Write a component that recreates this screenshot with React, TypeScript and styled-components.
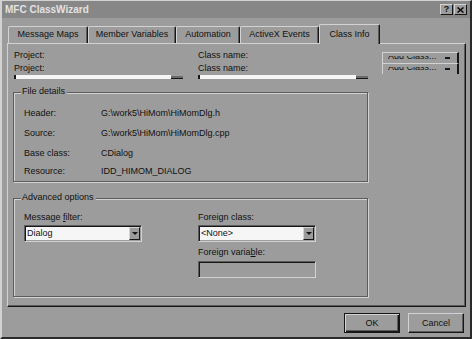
import React from "react";
import styled, { createGlobalStyle, css } from "styled-components";

const face = "#9c9c9c";
const light = "#d2d2d2";
const shadow = "#5c5c5c";
const dark = "#161616";
const white = "#f6f6f6";

const GlobalStyle = createGlobalStyle`
  * { box-sizing: border-box; }
  html, body { margin: 0; padding: 0; background: ${face}; }
  body {
    width: 472px;
    height: 339px;
    overflow: hidden;
    font-family: "Liberation Sans", Arial, sans-serif;
    font-size: 9px;
    color: #111;
  }
`;

const Window = styled.div`
  width: 472px;
  height: 339px;
  display: flex;
  flex-direction: column;
  background: ${face};
  border-top: 1px solid ${light};
  border-left: 2px solid ${light};
  border-right: 2px solid #2a2a2a;
  border-bottom: 2px solid #2a2a2a;
`;

const TitleBar = styled.div`
  height: 17px;
  flex: none;
  display: flex;
  align-items: center;
  justify-content: space-between;
  padding: 0 3px 0 3px;
  background: #878787;
`;

const TitleText = styled.span`
  font-size: 10px;
  font-weight: bold;
  color: #e2e2e2;
`;

const CaptionButtons = styled.div`
  display: flex;
  gap: 1px;
`;

const CaptionButton = styled.div`
  width: 13px;
  height: 11px;
  display: flex;
  align-items: center;
  justify-content: center;
  background: ${face};
  border-top: 1px solid ${light};
  border-left: 1px solid ${light};
  border-right: 1px solid ${dark};
  border-bottom: 1px solid ${dark};
  font-size: 9px;
  font-weight: bold;
  line-height: 9px;
  color: #111;
`;

const Body = styled.div`
  flex: 1;
  display: flex;
  flex-direction: column;
  padding: 0 4px 0 5px;
`;

const TabRow = styled.div`
  display: flex;
  align-items: flex-end;
  height: 26px;
  margin-bottom: -1px;
  padding-left: 1px;
`;

const Tab = styled.div<{ $w: number; $active?: boolean }>`
  width: ${(p) => p.$w}px;
  height: ${(p) => (p.$active ? 20 : 18)}px;
  display: flex;
  align-items: flex-start;
  justify-content: center;
  padding-top: ${(p) => (p.$active ? 4 : 2)}px;
  line-height: 10px;
  background: ${face};
  border-top: 1px solid ${light};
  border-left: 1px solid ${light};
  border-right: 1px solid ${dark};
  box-shadow: inset -1px 0 0 ${shadow};
  border-radius: 2px 2px 0 0;
  white-space: nowrap;
  ${(p) =>
    p.$active &&
    css`
      position: relative;
      z-index: 1;
    `}
`;

const Panel = styled.div`
  height: 264px;
  flex: none;
  display: flex;
  padding: 5px 0 0 5px;
  border-top: 1px solid ${light};
  border-left: 1px solid ${light};
  border-right: 1px solid ${dark};
  border-bottom: 1px solid ${dark};
  box-shadow: inset -1px -1px 0 ${shadow};
`;

const MainCol = styled.div`
  width: 356px;
  flex: none;
  display: flex;
  flex-direction: column;
`;

const TopFields = styled.div`
  display: flex;
  padding-left: 1px;
`;

const FieldCol = styled.div<{ $w: number; $ml?: number }>`
  width: ${(p) => p.$w}px;
  margin-left: ${(p) => p.$ml ?? 0}px;
  display: flex;
  flex-direction: column;
`;

const Label = styled.div`
  height: 13px;
  line-height: 13px;
  white-space: nowrap;
`;

const ComboStub = styled.div`
  height: 4px;
  display: flex;
  justify-content: flex-end;
  background: ${white};
  border-left: 2px solid ${dark};
`;

const StubButton = styled.div`
  width: 12px;
  height: 4px;
  background: #6a6a6a;
  border-top: 1px solid ${face};
  border-bottom: 1px solid ${dark};
`;

const GroupBox = styled.div<{ $mt: number }>`
  margin-top: ${(p) => p.$mt}px;
  width: 355px;
  border: 1px solid ${shadow};
  box-shadow: inset 1px 1px 0 ${light}, 1px 1px 0 ${light};
`;

const GroupTitle = styled.div`
  width: fit-content;
  height: 11px;
  line-height: 11px;
  margin: -7px 0 0 7px;
  padding: 0 2px 0 1px;
  background: ${face};
  white-space: nowrap;
`;

const DetailGrid = styled.div`
  display: grid;
  grid-template-columns: 77px auto;
  grid-template-rows: 20px 20px 19px 17px;
  align-items: center;
  margin-top: 6px;
  padding: 0 0 2px 10px;
  white-space: nowrap;
`;

const AdvContent = styled.div`
  display: flex;
  padding: 8px 0 18px 10px;
`;

const AdvCol = styled.div<{ $w?: number }>`
  ${(p) => (p.$w ? `width: ${p.$w}px; flex: none;` : "flex: 1;")}
  display: flex;
  flex-direction: column;
`;

const ComboBox = styled.div<{ $w: number; $mt: number; $disabled?: boolean }>`
  width: ${(p) => p.$w}px;
  height: 17px;
  margin-top: ${(p) => p.$mt}px;
  display: flex;
  padding: 1px;
  background: ${(p) => (p.$disabled ? face : white)};
  border-top: 1px solid ${shadow};
  border-left: 1px solid ${shadow};
  border-right: 1px solid ${light};
  border-bottom: 1px solid ${light};
  box-shadow: inset 1px 1px 0 ${dark}, inset -1px -1px 0 ${face};
`;

const ComboText = styled.div`
  flex: 1;
  padding-left: 1px;
  line-height: 13px;
  white-space: nowrap;
`;

const DropButton = styled.div`
  width: 11px;
  flex: none;
  display: flex;
  align-items: center;
  justify-content: center;
  background: ${face};
  border-top: 1px solid ${light};
  border-left: 1px solid ${light};
  border-right: 1px solid ${dark};
  border-bottom: 1px solid ${dark};
  &::after {
    content: "";
    border-left: 3px solid transparent;
    border-right: 3px solid transparent;
    border-top: 3px solid ${dark};
  }
`;

const SideCol = styled.div`
  margin-left: 13px;
  padding-top: 3px;
  width: 77px;
  display: flex;
  flex-direction: column;
`;

const AddButton = styled.div`
  height: 11px;
  display: flex;
  align-items: flex-start;
  justify-content: space-between;
  padding: 3px 7px 0 5px;
  overflow: hidden;
  border-top: 1px solid ${light};
  border-left: 1px solid ${light};
  border-right: 2px solid ${dark};
`;

const ClippedText = styled.div`
  height: 4px;
  overflow: hidden;
  & > span {
    display: block;
    margin-top: -5px;
    line-height: 11px;
    white-space: nowrap;
  }
`;

const Dash = styled.div`
  width: 5px;
  height: 2px;
  margin-top: 1px;
  background: ${dark};
`;

const Footer = styled.div`
  display: flex;
  justify-content: flex-end;
  gap: 8px;
  margin-top: 6px;
  padding-right: 2px;
`;

const PushButton = styled.button<{ $default?: boolean }>`
  width: 56px;
  height: 20px;
  padding: 0;
  margin: 0;
  font: inherit;
  color: #111;
  display: flex;
  align-items: center;
  justify-content: center;
  background: ${face};
  ${(p) =>
    p.$default
      ? css`
          border: 1px solid ${dark};
          box-shadow: inset 1px 1px 0 ${light}, inset -1px -1px 0 ${dark},
            inset -2px -2px 0 ${shadow};
        `
      : css`
          border-top: 1px solid ${light};
          border-left: 1px solid ${light};
          border-right: 1px solid ${dark};
          border-bottom: 1px solid ${dark};
          box-shadow: inset -1px -1px 0 ${shadow};
        `}
`;

const tabs = [
  { label: "Message Maps", w: 80 },
  { label: "Member Variables", w: 88 },
  { label: "Automation", w: 64 },
  { label: "ActiveX Events", w: 79 },
  { label: "Class Info", w: 61, active: true },
];

const details = [
  ["Header:", "G:\\work5\\HiMom\\HiMomDlg.h"],
  ["Source:", "G:\\work5\\HiMom\\HiMomDlg.cpp"],
  ["Base class:", "CDialog"],
  ["Resource:", "IDD_HIMOM_DIALOG"],
];

export default function App() {
  return (
    <>
      <GlobalStyle />
      <Window>
        <TitleBar>
          <TitleText>MFC ClassWizard</TitleText>
          <CaptionButtons>
            <CaptionButton>?</CaptionButton>
            <CaptionButton>
              <svg width="7" height="6" viewBox="0 0 7 6">
                <path d="M0.5 0.5 L6.5 5.5 M6.5 0.5 L0.5 5.5" stroke="#111" strokeWidth="1.6" />
              </svg>
            </CaptionButton>
          </CaptionButtons>
        </TitleBar>
        <Body>
          <TabRow>
            {tabs.map((t) => (
              <Tab key={t.label} $w={t.w} $active={t.active}>
                {t.label}
              </Tab>
            ))}
          </TabRow>
          <Panel>
            <MainCol>
              <TopFields>
                <FieldCol $w={169}>
                  <Label>Project:</Label>
                  <Label>Project:</Label>
                  <ComboStub>
                    <StubButton />
                  </ComboStub>
                </FieldCol>
                <FieldCol $w={170} $ml={15}>
                  <Label>Class name:</Label>
                  <Label>Class name:</Label>
                  <ComboStub>
                    <StubButton />
                  </ComboStub>
                </FieldCol>
              </TopFields>
              <GroupBox $mt={13}>
                <GroupTitle>File details</GroupTitle>
                <DetailGrid>
                  {details.map(([k, v]) => (
                    <React.Fragment key={k}>
                      <div>{k}</div>
                      <div>{v}</div>
                    </React.Fragment>
                  ))}
                </DetailGrid>
              </GroupBox>
              <GroupBox $mt={16}>
                <GroupTitle>Advanced options</GroupTitle>
                <AdvContent>
                  <AdvCol $w={174}>
                    <Label>
                      Message <u>f</u>ilter:
                    </Label>
                    <ComboBox $w={118} $mt={1}>
                      <ComboText>Dialog</ComboText>
                      <DropButton />
                    </ComboBox>
                  </AdvCol>
                  <AdvCol>
                    <Label>Foreign class:</Label>
                    <ComboBox $w={118} $mt={1}>
                      <ComboText>{"<None>"}</ComboText>
                      <DropButton />
                    </ComboBox>
                    <Label style={{ marginTop: 4 }}>
                      Foreign varia<u>b</u>le:
                    </Label>
                    <ComboBox $w={118} $mt={2} $disabled />
                  </AdvCol>
                </AdvContent>
              </GroupBox>
            </MainCol>
            <SideCol>
              {[0, 1].map((i) => (
                <AddButton key={i}>
                  <ClippedText>
                    <span>Add Class...</span>
                  </ClippedText>
                  <Dash />
                </AddButton>
              ))}
            </SideCol>
          </Panel>
          <Footer>
            <PushButton $default>OK</PushButton>
            <PushButton>Cancel</PushButton>
          </Footer>
        </Body>
      </Window>
    </>
  );
}
